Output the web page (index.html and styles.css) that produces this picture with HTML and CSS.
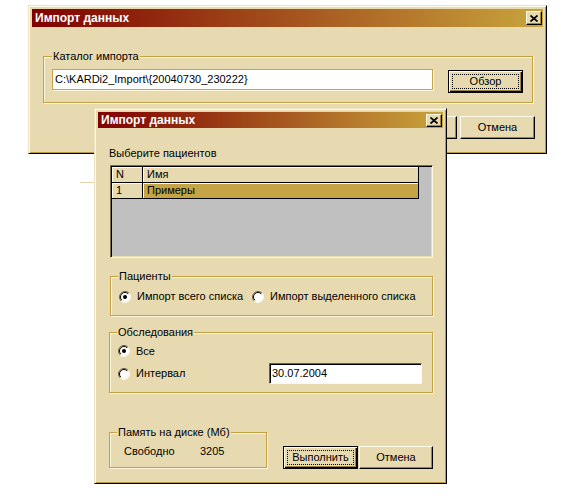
FILE: index.html
```html
<!DOCTYPE html>
<html lang="ru">
<head>
<meta charset="utf-8">
<title>Импорт данных</title>
<link rel="stylesheet" href="styles.css">
</head>
<body>
<div class="desktop">

  <div class="win win-outer">
    <div class="titlebar">
      <span class="title">Импорт данных</span>
      <span class="close"><svg width="8" height="7" viewBox="0 0 8 7"><path d="M0.5 0.5 L7.5 6.5 M7.5 0.5 L0.5 6.5" stroke="#000" stroke-width="1.7" fill="none"/></svg></span>
    </div>
    <div class="body body-outer">
      <fieldset class="group group-catalog">
        <legend>Каталог импорта</legend>
        <div class="catalog-row">
          <div class="path-input">C:\KARDi2_Import\{20040730_230222}</div>
          <div class="btn btn-default"><span class="focus">Обзор</span></div>
        </div>
      </fieldset>
      <div class="btn-row btn-row-outer">
        <div class="btn">ОК</div>
        <div class="btn">Отмена</div>
      </div>
    </div>
  </div>

  <div class="stray-line"></div>

  <div class="win win-inner">
    <div class="titlebar">
      <span class="title">Импорт данных</span>
      <span class="close"><svg width="8" height="7" viewBox="0 0 8 7"><path d="M0.5 0.5 L7.5 6.5 M7.5 0.5 L0.5 6.5" stroke="#000" stroke-width="1.7" fill="none"/></svg></span>
    </div>
    <div class="body body-inner">
      <div class="caption">Выберите пациентов</div>
      <div class="list">
        <div class="grid">
          <div class="hcell">N</div>
          <div class="hcell">Имя</div>
          <div class="cell">1</div>
          <div class="cell sel">Примеры</div>
        </div>
      </div>

      <fieldset class="group group-patients">
        <legend>Пациенты</legend>
        <div class="radios">
          <label class="opt">
            <svg class="radio" width="12" height="12" viewBox="0 0 12 12"><circle cx="6" cy="6" r="5" fill="#fff"/><path d="M2.1 9.9 A5.5 5.5 0 0 1 9.9 2.1" stroke="#6a6048" fill="none"/><path d="M9.9 2.1 A5.5 5.5 0 0 1 2.1 9.9" stroke="#fffbea" fill="none"/><path d="M2.8 9.2 A4.5 4.5 0 0 1 9.2 2.8" stroke="#000" fill="none"/><circle cx="6" cy="6" r="2" fill="#000"/></svg>
            <span>Импорт всего списка</span>
          </label>
          <label class="opt">
            <svg class="radio" width="12" height="12" viewBox="0 0 12 12"><circle cx="6" cy="6" r="5" fill="#fff"/><path d="M2.1 9.9 A5.5 5.5 0 0 1 9.9 2.1" stroke="#6a6048" fill="none"/><path d="M9.9 2.1 A5.5 5.5 0 0 1 2.1 9.9" stroke="#fffbea" fill="none"/><path d="M2.8 9.2 A4.5 4.5 0 0 1 9.2 2.8" stroke="#000" fill="none"/></svg>
            <span>Импорт выделенного списка</span>
          </label>
        </div>
      </fieldset>

      <fieldset class="group group-exams">
        <legend>Обследования</legend>
        <div class="exam-row exam-row-all">
          <label class="opt">
            <svg class="radio" width="12" height="12" viewBox="0 0 12 12"><circle cx="6" cy="6" r="5" fill="#fff"/><path d="M2.1 9.9 A5.5 5.5 0 0 1 9.9 2.1" stroke="#6a6048" fill="none"/><path d="M9.9 2.1 A5.5 5.5 0 0 1 2.1 9.9" stroke="#fffbea" fill="none"/><path d="M2.8 9.2 A4.5 4.5 0 0 1 9.2 2.8" stroke="#000" fill="none"/><circle cx="6" cy="6" r="2" fill="#000"/></svg>
            <span>Все</span>
          </label>
        </div>
        <div class="exam-row exam-row-interval">
          <label class="opt">
            <svg class="radio" width="12" height="12" viewBox="0 0 12 12"><circle cx="6" cy="6" r="5" fill="#fff"/><path d="M2.1 9.9 A5.5 5.5 0 0 1 9.9 2.1" stroke="#6a6048" fill="none"/><path d="M9.9 2.1 A5.5 5.5 0 0 1 2.1 9.9" stroke="#fffbea" fill="none"/><path d="M2.8 9.2 A4.5 4.5 0 0 1 9.2 2.8" stroke="#000" fill="none"/></svg>
            <span>Интервал</span>
          </label>
          <div class="date-input">30.07.2004</div>
        </div>
      </fieldset>

      <div class="bottom-row">
        <fieldset class="group group-memory">
          <legend>Память на диске (Мб)</legend>
          <div class="mem-row">
            <span class="mem-label">Свободно</span>
            <span class="mem-value">3205</span>
          </div>
        </fieldset>
        <div class="btn-row btn-row-inner">
          <div class="btn btn-default"><span class="focus">Выполнить</span></div>
          <div class="btn btn-narrow">Отмена</div>
        </div>
      </div>
    </div>
  </div>

</div>
</body>
</html>
```

FILE: styles.css
```css
body {
  margin: 0;
  background: #ffffff;
  font-family: "Liberation Sans", Arial, sans-serif;
  font-size: 11px;
  line-height: 13px;
  color: #000;
}

.desktop {
  position: relative;
  width: 579px;
  height: 502px;
  overflow: hidden;
}

/* windows on the desktop */
.win {
  position: absolute;
  box-sizing: border-box;
  background: #e8dab0;
  border: 1px solid;
  border-color: #ece2c2 #000 #000 #ece2c2;
  box-shadow: inset 1px 1px 0 #fffbea, inset -1px -1px 0 #b89a44;
  padding: 3px;
  display: flex;
  flex-direction: column;
}

.win-outer {
  left: 28px;
  top: 5px;
  width: 519px;
  height: 149px;
}

.win-inner {
  left: 94px;
  top: 108px;
  width: 353px;
  height: 376px;
}

.stray-line {
  position: absolute;
  left: 80px;
  top: 182px;
  width: 14px;
  height: 1px;
  background: #e4d4a4;
}

.titlebar {
  display: flex;
  align-items: center;
  justify-content: space-between;
  background: linear-gradient(to right, #800000, #c8a43c);
  color: #fff;
  font-weight: bold;
  font-size: 12px;
  padding-left: 3px;
  flex: none;
}

.win-outer .titlebar { height: 18px; }
.win-inner .titlebar { height: 16px; }

.close {
  width: 16px;
  height: 14px;
  box-sizing: border-box;
  background: #e8dab0;
  border: 1px solid;
  border-color: #fffbea #000 #000 #fffbea;
  box-shadow: inset -1px -1px 0 #a08838;
  display: flex;
  align-items: center;
  justify-content: center;
  margin-right: 1px;
}

.win-inner .close { height: 13px; }

.body {
  display: flex;
  flex-direction: column;
}

/* group boxes */
.group {
  margin: 0;
  min-width: 0;
  border: 1px solid #c4a040;
  box-shadow: 1px 1px 0 #fff6dc, inset 1px 1px 0 #fff6dc;
}

.group legend {
  padding: 0 1px;
  background: #e8dab0;
  line-height: 13px;
}

/* buttons */
.btn {
  width: 75px;
  height: 23px;
  box-sizing: border-box;
  display: flex;
  align-items: center;
  justify-content: center;
  background: #e8dab0;
  border: 1px solid;
  border-color: #fffbea #000 #000 #fffbea;
  box-shadow: inset -1px -1px 0 #a08838;
  flex: none;
}

.btn-default {
  border-color: #000;
  box-shadow: inset 1px 1px 0 #fffbea, inset -1px -1px 0 #000, inset -2px -2px 0 #a08838;
}

.btn-default .focus {
  flex: 1;
  align-self: stretch;
  margin: 3px;
  border: 1px dotted #000;
  display: flex;
  align-items: center;
  justify-content: center;
}

.btn-narrow { width: 74px; }

.btn-row {
  display: flex;
  justify-content: flex-end;
}

/* outer window */
.body-outer {
  padding: 23px 10px 0 11px;
}

.group-catalog {
  padding: 6px 9px 9px 8px;
}

.catalog-row {
  display: flex;
  align-items: flex-start;
  gap: 15px;
}

.catalog-row .btn { margin-top: 1px; }

.path-input {
  width: 381px;
  height: 21px;
  box-sizing: border-box;
  background: #fff;
  border: 1px solid #c8a448;
  box-shadow: 1px 1px 0 #fff6dc;
  padding-left: 2px;
  line-height: 19px;
  white-space: nowrap;
}

.btn-row-outer {
  margin-top: 13px;
  margin-right: -2px;
  gap: 3px;
}

/* inner window */
.body-inner {
  padding: 19px 10px 0 11px;
}

.caption {
  line-height: 13px;
}

.list {
  margin-top: 5px;
  margin-left: 1px;
  height: 93px;
  box-sizing: border-box;
  border: 1px solid;
  border-color: #7a6c48 #fff8e4 #fff8e4 #7a6c48;
  box-shadow: inset 1px 1px 0 #000, inset -1px -1px 0 #e8dab0;
  background: #c0c0c0;
  padding: 1px 0 0 1px;
}

.grid {
  display: grid;
  grid-template-columns: 31px 276px;
  grid-auto-rows: 16px;
}

.hcell,
.cell {
  box-sizing: border-box;
  border-right: 1px solid #000;
  border-bottom: 1px solid #000;
  padding-left: 4px;
  line-height: 15px;
  background: #e8dab0;
  box-shadow: inset 1px 1px 0 #fffbea;
}

.cell.sel {
  background: #c4a444;
}

.group-patients {
  margin-top: 12px;
  margin-left: 1px;
  padding: 7px 9px 12px 7px;
}

.radios {
  display: flex;
  align-items: center;
}

.opt {
  display: flex;
  align-items: center;
  gap: 6px;
}

.radio {
  flex: none;
  margin-left: 1px;
}

.opt + .opt { margin-left: 8px; }

.group-exams {
  margin-top: 10px;
  padding: 5px 10px 8px 7px;
}

.exam-row {
  display: flex;
  align-items: center;
}

.exam-row-all { height: 14px; }

.exam-row-interval {
  margin-top: 5px;
  height: 21px;
  justify-content: space-between;
}

.date-input {
  width: 153px;
  height: 21px;
  box-sizing: border-box;
  background: #fff;
  border: 1px solid;
  border-color: #6a6048 #fff8e4 #fff8e4 #6a6048;
  box-shadow: inset 1px 1px 0 #000;
  padding-left: 2px;
  line-height: 18px;
}

.bottom-row {
  margin-top: 33px;
  display: flex;
  align-items: flex-end;
}

.group-memory {
  width: 158px;
  box-sizing: border-box;
  padding: 6px 7px 9px 7px;
}

.mem-row {
  display: flex;
  padding-left: 7px;
}

.mem-label { width: 76px; }

.btn-row-inner {
  margin-left: auto;
  margin-bottom: -1px;
  gap: 1px;
}
```
